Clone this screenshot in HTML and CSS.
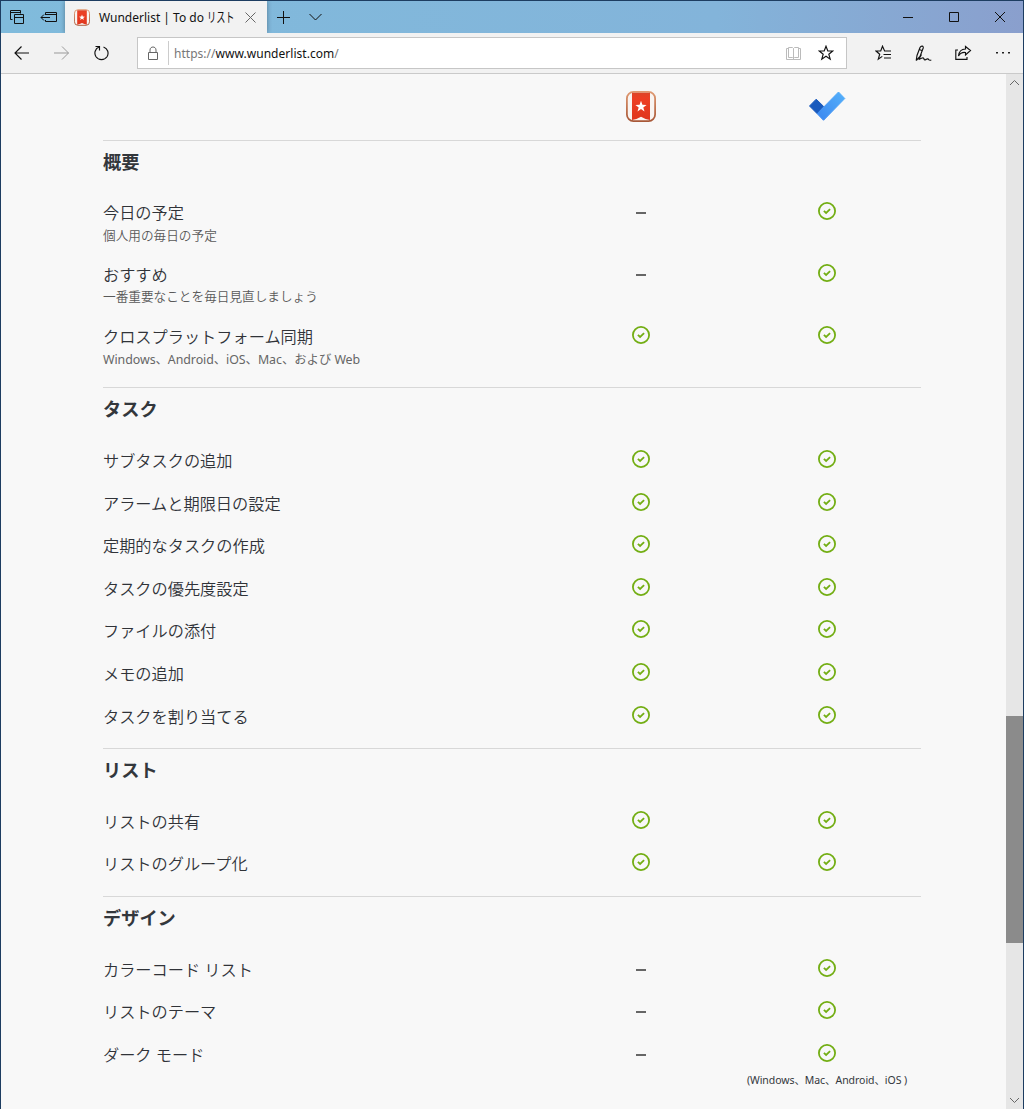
FILE: index.html
```html
<!DOCTYPE html>
<html lang="ja">
<head>
    <meta charset="UTF-8">
    <meta name="viewport" content="width=device-width, initial-scale=1.0">
    <title>Wunderlist | To do リスト</title>
    <link rel="stylesheet" href="styles.css">
</head>
<body>
    <svg class="sprite" width="0" height="0">
        <linearGradient id="logo-edge" x1="0" y1="0" x2="0" y2="1">
            <stop offset="0" stop-color="#e09a72"/>
            <stop offset="1" stop-color="#a85838"/>
        </linearGradient>
        <linearGradient id="logo-red" x1="0" y1="0" x2="0" y2="1">
            <stop offset="0" stop-color="#dc4529"/>
            <stop offset="0.2" stop-color="#ed3f24"/>
            <stop offset="1" stop-color="#df361d"/>
        </linearGradient>
        <linearGradient id="todo-blue" x1="1" y1="0" x2="0" y2="1">
            <stop offset="0" stop-color="#55b1fb"/>
            <stop offset="1" stop-color="#3a86ef"/>
        </linearGradient>
        <symbol id="check" viewBox="0 0 18 18">
            <circle cx="9" cy="9" r="8.1" fill="none" stroke="#73ae14" stroke-width="1.8"/>
            <path d="M5.900 8.800l2.200 2.200 4-3.900" fill="none" stroke="#73ae14" stroke-width="1.8"/>
        </symbol>
        <symbol id="wunderlist" viewBox="0 0 30 31">
            <rect x="0.9" y="0.9" width="28.2" height="29.2" rx="6.5" fill="#f9f4f1" stroke="url(#logo-edge)" stroke-width="1.8"/>
            <path d="M6 1.800h18v27.200q-5-.6-9-3.200-4 2.600-9 3.200z" fill="url(#logo-red)"/>
            <path d="M15 9.800l1.400 4 4.200.1-3.300 2.500 1.200 4-3.500-2.400-3.500 2.400 1.200-4-3.300-2.500 4.200-.1z" fill="#fff"/>
        </symbol>
    </svg>

    <div class="window">
        <header class="titlebar">
            <div class="tab-tools">
                <svg width="16" height="16" viewBox="0 0 16 16" class="line"><path d="M3.500 10.500h-2v-9h10v3M1.500 3.500h10M5.500 5.500h9v9h-9zM5.500 8.500h9"/></svg>
                <svg width="18" height="16" viewBox="0 0 18 16" class="line"><path d="M5.500 6V3.500h11v9h-11V11M5.500 5.500h11M1 8.500h9M4 5.500l-3 3 3 3"/></svg>
            </div>
            <div class="tab">
                <svg width="16" height="17"><use href="#wunderlist"/></svg>
                <span class="tab-title">Wunderlist | To do <span class="half">リスト</span></span>
                <svg width="11" height="11" viewBox="0 0 11 11" class="line gray"><path d="M.5.5l10 10M10.500.5l-10 10"/></svg>
            </div>
            <div class="tab-actions">
                <svg width="13" height="13" viewBox="0 0 13 13" class="line"><path d="M6.500 0v13M0 6.500h13"/></svg>
                <svg width="13" height="8" viewBox="0 0 13 8" class="line"><path d="M.5 1l6 6 6-6"/></svg>
            </div>
            <div class="window-buttons">
                <svg width="10" height="10" viewBox="0 0 10 10" class="line"><path d="M0 5.500h10"/></svg>
                <svg width="10" height="10" viewBox="0 0 10 10" class="line"><path d="M.5.5h9v9h-9z"/></svg>
                <svg width="10" height="10" viewBox="0 0 10 10" class="line"><path d="M0 0l10 10M10 0L0 10"/></svg>
            </div>
        </header>

        <div class="toolbar">
            <div class="nav">
                <svg width="16" height="14" viewBox="0 0 16 14" class="line bold"><path d="M15 7H1M7.500.5L1 7l6.500 6.500"/></svg>
                <svg width="16" height="14" viewBox="0 0 16 14" class="line light"><path d="M0 7h14.500M8 .5L14.500 7 8 13.500"/></svg>
                <svg width="16" height="16" viewBox="0 0 16 16" class="line bold"><path d="M1.500 1.500h4v4M5 2C1 3.800-.2 8.200 2 11.800c2.600 3.800 8.400 3.800 11 0C15.200 8 13.800 3.500 9.500 2"/></svg>
            </div>
            <div class="address">
                <svg width="12" height="15" viewBox="0 0 12 15" class="line gray"><path d="M1.500 6.500h9v7h-9zM3 6.500V4c0-4 6-4 6 0v2.500"/></svg>
                <span class="divider"></span>
                <span class="url"><span class="muted">https://</span>www.wunderlist.com<span class="muted">/</span></span>
                <svg width="15" height="14" viewBox="0 0 15 14" class="line pale"><path d="M2.500 1.500h4l1 1 1-1h4v10h-4l-1 1-1-1h-4zM2.500 2.500h-2v11h14v-11h-2M7.500 2.500v11"/></svg>
                <svg width="16" height="16" viewBox="0 0 16 16" class="line bold"><path d="M8 1.200l1.800 4.800h4.900l-3.900 3.200 1.400 5L8 11.200l-4.200 3 1.400-5L1.300 6h4.900z"/></svg>
            </div>
            <div class="tools">
                <svg width="17" height="16" viewBox="0 0 17 16" class="line bold"><path d="M16 6H9.600L7.500 1.200 5.700 6H1l3.700 3.200-1.400 5 4-2.800M8.500 9.500H16M9 13h7"/></svg>
                <svg width="17" height="17" viewBox="0 0 17 17" class="line bold"><path d="M1.200 15.500L2 10.500 5 2.500C6.200.3 8.700.9 8.200 3L5 11.500l-3.800 4M4.200 4.500l2.700 1M6.500 9.500l-2.800 5M4 14.500c2.500-1.500 4.300-2.200 4.800-1 .4 1.500 1.400 1.800 2.600.8 1.200-.9 1.800-.4 2.300.3.500.6 1.300.8 2.600.4"/></svg>
                <svg width="17" height="16" viewBox="0 0 17 16" class="line bold"><path d="M3 5H.8v9.300H12V12M10.500 1.500l5 4-5 4.500V7.500C7 7 5 8.500 3.500 11c.5-4.500 3-7 7-7z"/></svg>
                <svg width="16" height="4" viewBox="0 0 16 4"><path d="M1 1h2v1.600H1zM7 1h2v1.600H7zM13 1h2v1.600h-2z" fill="#222"/></svg>
            </div>
        </div>

        <div class="viewport">
            <main class="compare">
                <div class="logos">
                    <span></span>
                    <svg width="30" height="31"><use href="#wunderlist"/></svg>
                    <svg width="38" height="31" viewBox="0 0 38 31">
                        <path d="M1.500 15L8.200 8.200l7.500 7.300-6.500 7.200z" fill="#195abd" stroke="#195abd" stroke-linejoin="round"/>
                        <path d="M9.200 22.700L30.500 1l6.300 6.500L15.500 29.300z" fill="url(#todo-blue)" stroke="url(#todo-blue)" stroke-linejoin="round"/>
                    </svg>
                </div>

                <section class="group">
                    <h2>概要</h2>
                    <div class="row tall">
                        <div><h3>今日の予定</h3><p>個人用の毎日の予定</p></div>
                        <span class="dash"></span>
                        <svg class="check"><use href="#check"/></svg>
                    </div>
                    <div class="row tall">
                        <div><h3>おすすめ</h3><p>一番重要なことを毎日見直しましょう</p></div>
                        <span class="dash"></span>
                        <svg class="check"><use href="#check"/></svg>
                    </div>
                    <div class="row tall">
                        <div><h3>クロスプラットフォーム同期</h3><p class="platforms">Windows、Android、iOS、Mac、および Web</p></div>
                        <svg class="check"><use href="#check"/></svg>
                        <svg class="check"><use href="#check"/></svg>
                    </div>
                </section>

                <section class="group">
                    <h2>タスク</h2>
                    <div class="row">
                        <h3>サブタスクの追加</h3>
                        <svg class="check"><use href="#check"/></svg>
                        <svg class="check"><use href="#check"/></svg>
                    </div>
                    <div class="row">
                        <h3>アラームと期限日の設定</h3>
                        <svg class="check"><use href="#check"/></svg>
                        <svg class="check"><use href="#check"/></svg>
                    </div>
                    <div class="row">
                        <h3>定期的なタスクの作成</h3>
                        <svg class="check"><use href="#check"/></svg>
                        <svg class="check"><use href="#check"/></svg>
                    </div>
                    <div class="row">
                        <h3>タスクの優先度設定</h3>
                        <svg class="check"><use href="#check"/></svg>
                        <svg class="check"><use href="#check"/></svg>
                    </div>
                    <div class="row">
                        <h3>ファイルの添付</h3>
                        <svg class="check"><use href="#check"/></svg>
                        <svg class="check"><use href="#check"/></svg>
                    </div>
                    <div class="row">
                        <h3>メモの追加</h3>
                        <svg class="check"><use href="#check"/></svg>
                        <svg class="check"><use href="#check"/></svg>
                    </div>
                    <div class="row">
                        <h3>タスクを割り当てる</h3>
                        <svg class="check"><use href="#check"/></svg>
                        <svg class="check"><use href="#check"/></svg>
                    </div>
                </section>

                <section class="group">
                    <h2>リスト</h2>
                    <div class="row">
                        <h3>リストの共有</h3>
                        <svg class="check"><use href="#check"/></svg>
                        <svg class="check"><use href="#check"/></svg>
                    </div>
                    <div class="row">
                        <h3>リストのグループ化</h3>
                        <svg class="check"><use href="#check"/></svg>
                        <svg class="check"><use href="#check"/></svg>
                    </div>
                </section>

                <section class="group">
                    <h2>デザイン</h2>
                    <div class="row">
                        <h3>カラーコード リスト</h3>
                        <span class="dash"></span>
                        <svg class="check"><use href="#check"/></svg>
                    </div>
                    <div class="row">
                        <h3>リストのテーマ</h3>
                        <span class="dash"></span>
                        <svg class="check"><use href="#check"/></svg>
                    </div>
                    <div class="row">
                        <h3>ダーク モード</h3>
                        <span class="dash"></span>
                        <div class="noted">
                            <svg class="check"><use href="#check"/></svg>
                            <small>(Windows、Mac、Android、iOS )</small>
                        </div>
                    </div>
                </section>
            </main>

            <div class="scrollbar">
                <svg width="11" height="7" viewBox="0 0 11 7" class="line gray"><path d="M1 6l4.500-4.500L10 6"/></svg>
                <div class="thumb"></div>
                <svg width="11" height="7" viewBox="0 0 11 7" class="line gray"><path d="M1 1l4.500 4.500L10 1"/></svg>
            </div>
        </div>
    </div>
</body>
</html>
```
FILE: styles.css
```css
* {
    box-sizing: border-box;
    margin: 0;
    padding: 0;
}
body {
    font-family: "Noto Sans", "Noto Sans CJK JP", sans-serif;
    color: #33373c;
    background: #f8f8f8;
    overflow: hidden;
}
svg {
    display: block;
    flex: none;
}
.sprite {
    position: absolute;
}
.line {
    fill: none;
    stroke: #111;
    stroke-width: 1;
}
.line.bold { stroke-width: 1.15; }
.line.gray { stroke: #666; }
.line.light { stroke: #999; }
.line.pale { stroke: #bbb; }

.window {
    display: flex;
    flex-direction: column;
    height: 1109px;
    border: 1px solid #1d3d61;
    border-bottom: none;
}

/* title bar */
.titlebar {
    display: flex;
    height: 32px;
    background: linear-gradient(90deg, #80bbdc 0%, #83b4da 70%, #8a9fcd 100%);
}
.tab-tools {
    display: flex;
    align-items: center;
    gap: 15px;
    width: 64px;
    padding-left: 8px;
}
.tab {
    display: flex;
    align-items: center;
    width: 202px;
    padding-left: 9px;
    background: #f2f2f2;
    box-shadow: 0 0 5px rgba(0, 0, 0, 0.35);
    clip-path: inset(0 -5px 0 -5px);
}
.tab-title {
    width: 146px;
    margin-left: 9px;
    font-size: 12px;
    line-height: 18px;
    white-space: nowrap;
    color: #111;
}
.half {
    display: inline-block;
    font-size: 13.5px;
    transform: scaleX(0.68);
    transform-origin: left;
}
.tab-actions {
    display: flex;
    align-items: center;
    gap: 19px;
    padding-left: 10px;
}
.window-buttons {
    display: flex;
    align-items: center;
    gap: 36px;
    margin-left: auto;
    padding-right: 18px;
}

/* toolbar */
.toolbar {
    display: flex;
    align-items: center;
    height: 41px;
    background: #f2f2f2;
    border-bottom: 1px solid #cacaca;
}
.nav {
    display: flex;
    align-items: center;
    gap: 24px;
    width: 136px;
    padding-left: 13px;
}
.address {
    display: flex;
    align-items: center;
    width: 710px;
    height: 32px;
    padding: 0 12px 0 9px;
    background: #fff;
    border: 1px solid #c6c6c6;
}
.divider {
    width: 1px;
    height: 24px;
    margin: 0 5px 0 9px;
    background: #ccc;
}
.url {
    flex: 1;
    font-size: 12px;
    letter-spacing: 0.03px;
    color: #111;
}
.url + svg {
    margin-right: 17px;
}
.muted { color: #777; }
.tools {
    display: flex;
    align-items: center;
    gap: 23px;
    padding-left: 28px;
}

/* page */
.viewport {
    display: flex;
    flex: 1;
    min-height: 0;
    background: #f8f8f8;
}
.compare {
    width: 818px;
    margin-left: 102px;
}
.logos,
.row {
    display: grid;
    grid-template-columns: 1fr 186px 186px;
    justify-items: center;
    padding-right: 1px;
}
.logos {
    height: 66px;
    padding-top: 17px;
}
.group {
    padding-bottom: 12.1px;
    border-top: 1px solid #d8d8d8;
}
.group h2 {
    height: 49.5px;
    padding-top: 8px;
    font-size: 18.2px;
    line-height: 27px;
    font-weight: 700;
}
.row {
    height: 42.6px;
    padding-top: 12.1px;
}
.row.tall {
    height: 61.6px;
    padding-top: 11.9px;
}
.row > :first-child {
    justify-self: start;
}
.row h3 {
    height: 24px;
    font-size: 16.2px;
    line-height: 22px;
    font-weight: 350;
    color: #303338;
    white-space: nowrap;
}
.row.tall h3 {
    height: 22.5px;
    line-height: 23px;
}
.row p {
    font-size: 12.65px;
    line-height: 20px;
    font-weight: 350;
    color: #595959;
    white-space: nowrap;
}
.row .platforms {
    font-size: 12.4px;
    line-height: 23px;
    font-weight: 400;
    color: #666;
    letter-spacing: -0.06px;
}
.check {
    width: 18px;
    height: 18px;
}
.dash {
    width: 10px;
    height: 2px;
    margin-top: 10px;
    background: #666;
}
.noted {
    display: flex;
    flex-direction: column;
    align-items: center;
}
.noted small {
    margin-top: 9px;
    font-size: 10.5px;
    line-height: 18px;
    letter-spacing: -0.06px;
    white-space: nowrap;
}

/* scrollbar */
.scrollbar {
    display: flex;
    flex-direction: column;
    align-items: center;
    width: 17px;
    margin-left: auto;
    padding: 5px 0;
    background: #e6e6e6;
}
.thumb {
    width: 17px;
    height: 227px;
    margin: 630px 0 auto;
    background: #8b8b8b;
}
```
